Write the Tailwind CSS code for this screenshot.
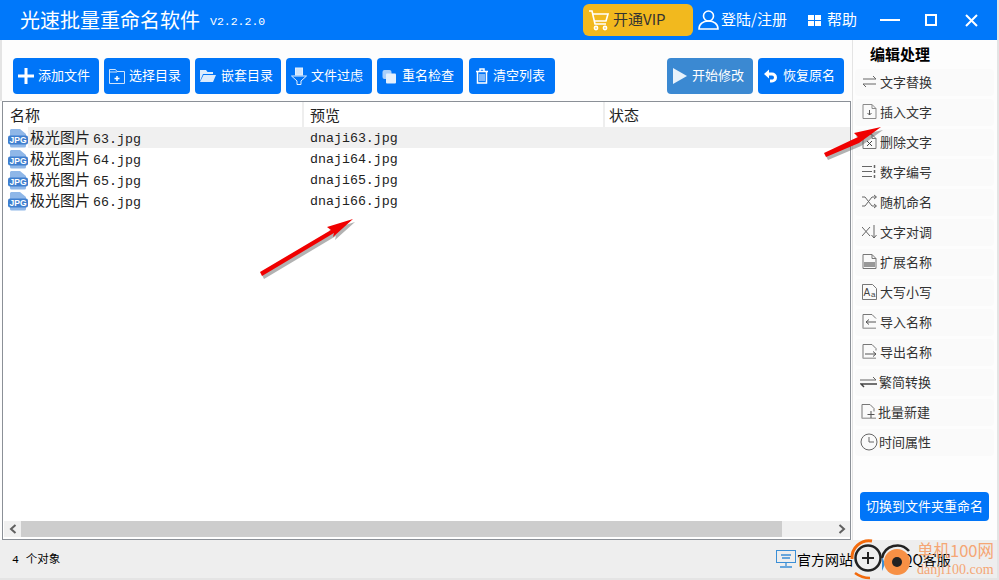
<!doctype html>
<html lang="zh-CN">
<head>
<meta charset="UTF-8" />
<title>光速批量重命名软件</title>
<script src="https://cdn.jsdelivr.net/npm/@tailwindcss/browser@4"></script>
</head>
<body class="m-0 overflow-hidden bg-[#e4e4e4]">
<div class="relative w-[999px] h-[580px] overflow-hidden bg-[#e4e4e4] font-['Noto_Sans_CJK_SC','Liberation_Sans',sans-serif]">

  <!-- Title bar -->
  <header class="h-10 w-[997px] bg-[#0078fa] text-white flex items-center">
    <h1 class="ml-5 text-[20px] leading-none font-normal whitespace-nowrap">光速批量重命名软件</h1>
    <span class="ml-[10px] mt-1 w-[55px] text-[11.5px] font-['Liberation_Mono',monospace]">V2.2.2.0</span>
    <div class="ml-[318px] w-[110px] h-[32px] rounded-md bg-[#f2b91e] text-[#333] flex items-center pl-[5px] text-[15px] whitespace-nowrap">
      <svg class="w-[22px] h-[24px]" viewBox="0 0 22 24" fill="none" stroke="#fff" stroke-width="1.6"><path d="M1 3h3l3 13h11"/><path d="M5 6h15l-2 7H7"/><circle cx="8" cy="20" r="1.6"/><circle cx="17" cy="20" r="1.6"/></svg>
      <span class="ml-[3px] pb-[1px]">开通VIP</span>
    </div>
    <svg class="ml-[5px] w-[21px] h-[22px]" viewBox="0 0 21 22" fill="none" stroke="#fff" stroke-width="1.6"><circle cx="10.5" cy="7" r="5"/><path d="M1 20c0-5 4-8 9.500-8s9.500 3 9.500 8z"/></svg>
    <span class="ml-[2px] pb-[1px] w-[66px] text-[15px] whitespace-nowrap">登陆/注册</span>
    <svg class="ml-[21px] w-[13px] h-[11px]" viewBox="0 0 13 11" fill="#fff"><rect width="6" height="5"/><rect x="7" width="6" height="5"/><rect y="6" width="6" height="5"/><rect x="7" y="6" width="6" height="5"/></svg>
    <span class="ml-[6px] pb-[1px] text-[15px] whitespace-nowrap">帮助</span>
    <div class="ml-[23px] w-5 h-[2px] bg-white"></div>
    <div class="ml-[25px] w-[12px] h-[12px] border-2 border-white"></div>
    <svg class="ml-[28px] w-[13px] h-[13px]" viewBox="0 0 13 13" stroke="#fff" stroke-width="2"><path d="M1 1l11 11M12 1L1 12"/></svg>
  </header>

  <!-- Main area -->
  <div class="flex h-[500px] w-[997px] bg-[#fdfdfd]">
    <div class="w-[852px] pl-[2px] flex flex-col">
      <div class="ml-[-2px] border-l-2 border-[#e4e4e4] h-[61px] pt-[18px] pl-[11px] flex text-white text-[13px]">
        <div class="flex gap-[5px]">
          <button class="w-[86px] h-9 rounded bg-[#0075f8] flex items-center pl-[5px] gap-[4px]">
            <svg class="w-4 h-4" viewBox="0 0 16 16" fill="#fff"><rect y="6.500" width="16" height="3"/><rect x="6.500" width="3" height="16"/></svg><span class="pb-[2px]">添加文件</span>
          </button>
          <button class="w-[86px] h-9 rounded bg-[#0075f8] flex items-center pl-[5px] gap-[4px]">
            <svg class="w-4 h-4" viewBox="0 0 16 16" fill="none" stroke="#cfe4fb"><path d="M.5 15.500V1.500h6l1.500 2h7.500v12z"/><path d="M1 4h7" /><path d="M8 8v5M5.500 10.500h5" stroke="#fff" stroke-width="1.500"/></svg><span class="pb-[2px]">选择目录</span>
          </button>
          <button class="w-[86px] h-9 rounded bg-[#0075f8] flex items-center pl-[5px] gap-[5px]">
            <svg class="w-4 h-4" viewBox="0 0 16 16" fill="#dcebfc"><path d="M0 2h6l1.500 2H13v2H3L0 13z"/><path d="M3.500 7H16l-3 7H0z"/></svg><span class="pb-[2px]">嵌套目录</span>
          </button>
          <button class="w-[86px] h-9 rounded bg-[#0075f8] flex items-center pl-[5px] gap-[4px]">
            <svg class="w-4 h-[18px]" viewBox="0 0 16 18" fill="none" stroke="#e4f0fd"><rect x="4.500" y="1" width="7" height="7" fill="#cfe4fb"/><path d="M.5 9h15L10 14v3.500H6V14z"/></svg><span class="pb-[2px]">文件过虑</span>
          </button>
          <button class="w-[86px] h-9 rounded bg-[#0075f8] flex items-center pl-[5px] gap-[5px]">
            <svg class="w-[15px] h-[15px]" viewBox="0 0 15 15" fill="#e4f0fd"><rect x=".5" y="1" width="9" height="9" rx="2" fill="#a9cffa"/><rect x="4" y="4.500" width="10" height="10" rx="1"/></svg><span class="pb-[2px]">重名检查</span>
          </button>
          <button class="ml-[1px] w-[86px] h-9 rounded bg-[#0075f8] flex items-center pl-[6px] gap-[4px]">
            <svg class="w-[14px] h-4" viewBox="0 0 14 16" fill="none" stroke="#fff" stroke-width="1.500"><path d="M1 3.500h12M5 3V1h4v2M2.500 4v11h9V4"/><path d="M5 6v7M7 6v7M9 6v7" stroke-width="1"/></svg><span class="pb-[2px]">清空列表</span>
          </button>
        </div>
        <div class="ml-[112px] flex gap-[5px]">
          <button class="w-[86px] h-9 rounded bg-[#3b89d2] flex items-center pl-[6px] gap-[5px]">
            <svg class="w-[14px] h-4" viewBox="0 0 14 16" fill="#e8f2fb"><path d="M0 0l14 8-14 8z"/></svg><span class="pb-[2px]">开始修改</span>
          </button>
          <button class="w-[86px] h-9 rounded bg-[#0075f8] flex items-center pl-[6px] gap-[5px]">
            <svg class="w-[14px] h-[14px]" viewBox="0 0 14 14" fill="none" stroke="#fff" stroke-width="3"><path d="M3 5h5a3.500 3.500 0 0 1 0 7H6"/><path d="M0 5l5-4.500v9z" fill="#fff" stroke="none"/></svg><span class="pb-[2px]">恢复原名</span>
          </button>
        </div>
      </div>

      <!-- File list -->
      <div class="relative h-[439px] w-[849px] border border-[#8b9097] bg-white flex flex-col">
        <div class="h-[25px] flex text-[15px] text-[#222] leading-[25px]">
          <div class="w-[301px] pl-[7px] border-r-2 border-[#eeeeee]">名称</div>
          <div class="w-[301px] pl-[6px] border-r-2 border-[#eeeeee]">预览</div>
          <div class="pl-[4px]">状态</div>
        </div>

        <div class="flex-1 text-[#222]">
          <div class="h-[21px] flex items-center">
            <svg class="ml-[5px] w-5 h-5 shrink-0" viewBox="0 0 20 20"><path d="M3 1h9l6 5v12a1.500 1.500 0 0 1-1.500 1.500h-13A1.500 1.500 0 0 1 2 18V2z" fill="#8fb7e8"/><rect y="7.500" width="20" height="9" rx="2" fill="#3f7fcf"/><text x="10" y="15" text-anchor="middle" font-size="8.500" font-weight="700" fill="#fff" font-family="Liberation Sans">JPG</text></svg>
            <div class="flex-1 h-[21px] bg-[#f0f0f0] flex items-center">
              <div class="w-[282px] shrink-0 pl-[2px] text-[15px] whitespace-nowrap">极光图片<span class="ml-[3px] text-[13.3px] font-['Liberation_Mono',monospace]">63.jpg</span></div>
              <div class="pt-[2px] text-[13.3px] font-['Liberation_Mono',monospace]">dnaji63.jpg</div>
            </div>
          </div>
          <div class="h-[21px] flex items-center">
            <svg class="ml-[5px] w-5 h-5 shrink-0" viewBox="0 0 20 20"><path d="M3 1h9l6 5v12a1.500 1.500 0 0 1-1.500 1.500h-13A1.500 1.500 0 0 1 2 18V2z" fill="#8fb7e8"/><rect y="7.500" width="20" height="9" rx="2" fill="#3f7fcf"/><text x="10" y="15" text-anchor="middle" font-size="8.500" font-weight="700" fill="#fff" font-family="Liberation Sans">JPG</text></svg>
            <div class="w-[282px] shrink-0 pl-[2px] text-[15px] whitespace-nowrap">极光图片<span class="ml-[3px] text-[13.3px] font-['Liberation_Mono',monospace]">64.jpg</span></div>
            <div class="pt-[2px] text-[13.3px] font-['Liberation_Mono',monospace]">dnaji64.jpg</div>
          </div>
          <div class="h-[21px] flex items-center">
            <svg class="ml-[5px] w-5 h-5 shrink-0" viewBox="0 0 20 20"><path d="M3 1h9l6 5v12a1.500 1.500 0 0 1-1.500 1.500h-13A1.500 1.500 0 0 1 2 18V2z" fill="#8fb7e8"/><rect y="7.500" width="20" height="9" rx="2" fill="#3f7fcf"/><text x="10" y="15" text-anchor="middle" font-size="8.500" font-weight="700" fill="#fff" font-family="Liberation Sans">JPG</text></svg>
            <div class="w-[282px] shrink-0 pl-[2px] text-[15px] whitespace-nowrap">极光图片<span class="ml-[3px] text-[13.3px] font-['Liberation_Mono',monospace]">65.jpg</span></div>
            <div class="pt-[2px] text-[13.3px] font-['Liberation_Mono',monospace]">dnaji65.jpg</div>
          </div>
          <div class="h-[21px] flex items-center">
            <svg class="ml-[5px] w-5 h-5 shrink-0" viewBox="0 0 20 20"><path d="M3 1h9l6 5v12a1.500 1.500 0 0 1-1.500 1.500h-13A1.500 1.500 0 0 1 2 18V2z" fill="#8fb7e8"/><rect y="7.500" width="20" height="9" rx="2" fill="#3f7fcf"/><text x="10" y="15" text-anchor="middle" font-size="8.500" font-weight="700" fill="#fff" font-family="Liberation Sans">JPG</text></svg>
            <div class="w-[282px] shrink-0 pl-[2px] text-[15px] whitespace-nowrap">极光图片<span class="ml-[3px] text-[13.3px] font-['Liberation_Mono',monospace]">66.jpg</span></div>
            <div class="pt-[2px] text-[13.3px] font-['Liberation_Mono',monospace]">dnaji66.jpg</div>
          </div>
        </div>

        <!-- Scrollbar -->
        <div class="mb-[2px] ml-[1px] h-[16px] flex bg-[#f0f0f0]">
          <div class="w-[17px] flex items-center justify-center">
            <svg class="w-2 h-[10px]" viewBox="0 0 8 10" fill="none" stroke="#606060" stroke-width="2"><path d="M6.500 1L2 5l4.500 4"/></svg>
          </div>
          <div class="w-[761px] bg-[#cdcdcd]"></div>
          <div class="flex-1 flex items-center justify-end pr-[4px]">
            <svg class="w-2 h-[10px]" viewBox="0 0 8 10" fill="none" stroke="#606060" stroke-width="2"><path d="M1.500 1L6 5 1.500 9"/></svg>
          </div>
        </div>
      </div>
    </div>

    <!-- Edit sidebar -->
    <aside class="w-[145px] pl-[2px] flex flex-col bg-[#fdfdfd] border-l border-[#e4e4e4]">
      <div class="h-[29px] pl-[15px] pt-[5px] text-[15px] leading-[18px] font-bold text-black">编辑处理</div>
      <div class="flex flex-col gap-[3px] text-[13px] text-[#333] w-[139px]">
        <div class="h-[27px] pb-[2px] rounded bg-[#fafafa] flex items-center pl-[7px] gap-[3px]">
          <svg class="w-[15px] h-[15px]" viewBox="0 0 15 15" fill="none" stroke="#666"><path d="M1 5h13l-3-3M14 10H1l3 3"/></svg>文字替换
        </div>
        <div class="h-[27px] pb-[2px] rounded bg-[#fafafa] flex items-center pl-[7px] gap-[3px]">
          <svg class="w-[15px] h-[15px]" viewBox="0 0 15 15" fill="none" stroke="#8a8a8a"><path d="M1 .5h9l4 4v10H1zM10 .5v4h4"/><path d="M7.500 6v5M5.500 9l2 2 2-2" stroke="#555"/></svg>插入文字
        </div>
        <div class="h-[27px] pb-[2px] rounded bg-[#fafafa] flex items-center pl-[7px] gap-[3px]">
          <svg class="w-[15px] h-[15px]" viewBox="0 0 15 15" fill="none" stroke="#777"><path d="M1 .5h9l4 4v10H1zM10 .5v4h4"/><path d="M5 7l5 5M10 7l-5 5" stroke="#444"/></svg>删除文字
        </div>
        <div class="h-[27px] pb-[2px] rounded bg-[#fafafa] flex items-center pl-[7px] gap-[3px]">
          <svg class="w-[15px] h-[15px]" viewBox="0 0 15 15" fill="none" stroke="#666"><path d="M0 2.500h10M0 7.500h10M0 12.500h10"/><path d="M12.500 1v3M12.500 6v3M12.500 11v3" stroke-width="1.500"/></svg>数字编号
        </div>
        <div class="h-[27px] pb-[2px] rounded bg-[#fafafa] flex items-center pl-[7px] gap-[3px]">
          <svg class="w-[15px] h-[15px]" viewBox="0 0 15 15" fill="none" stroke="#666"><path d="M0 3h3l7 9h4M0 12h3l7-9h4"/><path d="M12 1l2.500 2L12 5M12 10l2.500 2-2.500 2"/></svg>随机命名
        </div>
        <div class="h-[27px] pb-[2px] rounded bg-[#fafafa] flex items-center pl-[7px] gap-[3px]">
          <svg class="w-[15px] h-[15px]" viewBox="0 0 15 15" fill="none" stroke="#666"><path d="M0 3l8 9M0 12l8-9"/><path d="M12 1v13M9.500 11l2.500 3 2.500-3"/></svg>文字对调
        </div>
        <div class="h-[27px] pb-[2px] rounded bg-[#fafafa] flex items-center pl-[7px] gap-[3px]">
          <svg class="w-[15px] h-[15px]" viewBox="0 0 15 15" fill="none" stroke="#777"><path d="M1 .5h9l4 4v10H1zM10 .5v4h4"/><rect x="2" y="8" width="11" height="5" fill="#999" stroke="none"/></svg>扩展名称
        </div>
        <div class="h-[27px] pb-[2px] rounded bg-[#fafafa] flex items-center pl-[7px] gap-[3px]">
          <svg class="w-[15px] h-[16px]" viewBox="0 0 15 16"><path d="M.5.5h10l4 4v11H.5z" fill="none" stroke="#777"/><text x="1.500" y="12" font-size="10" fill="#444" font-family="Liberation Sans">A</text><text x="9" y="13" font-size="8" fill="#444" font-family="Liberation Sans">a</text></svg>大写小写
        </div>
        <div class="h-[27px] pb-[2px] rounded bg-[#fafafa] flex items-center pl-[7px] gap-[3px]">
          <svg class="w-[15px] h-[15px]" viewBox="0 0 15 15" fill="none" stroke="#777"><path d="M1 14.500V.5h9l4 4"/><path d="M1 14.500h13" stroke-width="2" stroke="#aaa"/><path d="M14 8H4l3-2.500M4 8l3 2.500" stroke="#555"/></svg>导入名称
        </div>
        <div class="h-[27px] pb-[2px] rounded bg-[#fafafa] flex items-center pl-[7px] gap-[3px]">
          <svg class="w-[15px] h-[15px]" viewBox="0 0 15 15" fill="none" stroke="#777"><path d="M1 14.500V.5h9l4 4v2"/><path d="M1 14.500h13" stroke-width="2" stroke="#aaa"/><path d="M3 10h11l-3-2.500M14 10l-3 2.500" stroke="#555"/></svg>导出名称
        </div>
        <div class="h-[27px] pb-[2px] rounded bg-[#fafafa] flex items-center pl-[5px] gap-[2px]">
          <svg class="w-[17px] h-[15px]" viewBox="0 0 17 15" fill="none" stroke="#666"><path d="M0 6h16l-3-3"/><path d="M17 10H1l3 3" stroke="#444" stroke-width="1.500"/></svg>繁简转换
        </div>
        <div class="h-[27px] pb-[2px] rounded bg-[#fafafa] flex items-center pl-[6px] gap-[2px]">
          <svg class="w-[15px] h-[15px]" viewBox="0 0 15 15" fill="none" stroke="#777"><path d="M1 14.500V.5h8l4 4v3"/><path d="M1 14.500h14" stroke-width="2" stroke="#aaa"/><path d="M10 7v7M6.500 10.500h7" stroke="#555"/></svg>批量新建
        </div>
        <div class="h-[27px] pb-[2px] rounded bg-[#fafafa] flex items-center pl-[5px] gap-[1px]">
          <svg class="w-[18px] h-[18px]" viewBox="0 0 18 18" fill="none" stroke="#666"><circle cx="9" cy="9" r="8"/><path d="M9 4v5h5"/></svg>时间属性
        </div>
      </div>
      <button class="ml-[5px] mt-[36px] w-[129px] h-[29px] pb-[1px] rounded bg-[#0075f8] text-white text-[13px] whitespace-nowrap">切换到文件夹重命名</button>
    </aside>
  </div>

  <!-- Status bar -->
  <footer class="h-[38px] w-[997px] bg-[#eeeeee] flex items-center text-[14px] text-black">
    <span class="ml-[12px] mt-[2px] w-[50px] text-[11.5px] font-['Liberation_Mono','Noto_Sans_CJK_SC',monospace] whitespace-pre">4 个对象</span>
    <svg class="ml-[714px] w-5 h-[18px]" viewBox="0 0 20 18" fill="none" stroke="#3b8fd6"><rect x=".5" y=".5" width="19" height="12"/><path d="M5 5h10M6 8h8M10 13v3M4 17h12" stroke-width="1.300"/></svg>
    <span class="ml-[1px] whitespace-nowrap">官方网站</span>
    <span class="ml-[49px] whitespace-nowrap">QQ客服</span>
  </footer>

  <!-- Annotation arrows -->
  <svg class="absolute left-0 top-0 w-[999px] h-[580px] pointer-events-none" viewBox="0 0 999 580" fill="#f00000">
    <path d="M260 272l2 4 72-43-1 4 20-18-26 8 4 3z" fill="#555" opacity=".45" transform="translate(2 3)"/>
    <path d="M260 272l2 4 72-43-1 4 20-18-26 8 4 3z"/>
    <path d="M824 153l2 4 33-14 0 0 22-16-27 6 4 4z" fill="#555" opacity=".45" transform="translate(2 3)"/>
    <path d="M824 153l2 4 33-14 0 0 22-16-27 6 4 4z"/>
  </svg>

  <!-- Watermark -->
  <svg class="absolute left-[845px] top-[535px] w-[80px] h-[45px]" viewBox="0 0 80 45" fill="none">
    <path d="M7 24A17 17 0 0 1 27 6" stroke="#f26a0c" stroke-width="3"/>
    <path d="M10 38c4 3 8 5 15 5" stroke="#f26a0c" stroke-width="2.500"/>
    <circle cx="23" cy="23" r="12.500" stroke="#222" stroke-width="2.500"/>
    <path d="M23 17v12M17 23h12" stroke="#222" stroke-width="2"/>
    <path d="M37 21l3 8-3 7z" fill="#3b8fd6"/>
    <circle cx="52" cy="27" r="13" fill="#f79045"/>
    <circle cx="52" cy="27" r="5" fill="#222"/>
    <path d="M37 23A15.500 15.500 0 0 1 64 16" stroke="#222" stroke-width="2.500"/>
  </svg>
  <div class="absolute left-[917px] top-[539px] text-[16.5px] leading-[22px] text-[#f5a675] font-['Noto_Sans_CJK_SC',sans-serif] whitespace-nowrap">单机100网</div>
  <div class="absolute left-[917px] top-[562px] text-[14px] leading-[16px] text-[#f5a675] font-['Liberation_Serif',serif] whitespace-nowrap">danji100.com</div>
</div>
</body>
</html>
